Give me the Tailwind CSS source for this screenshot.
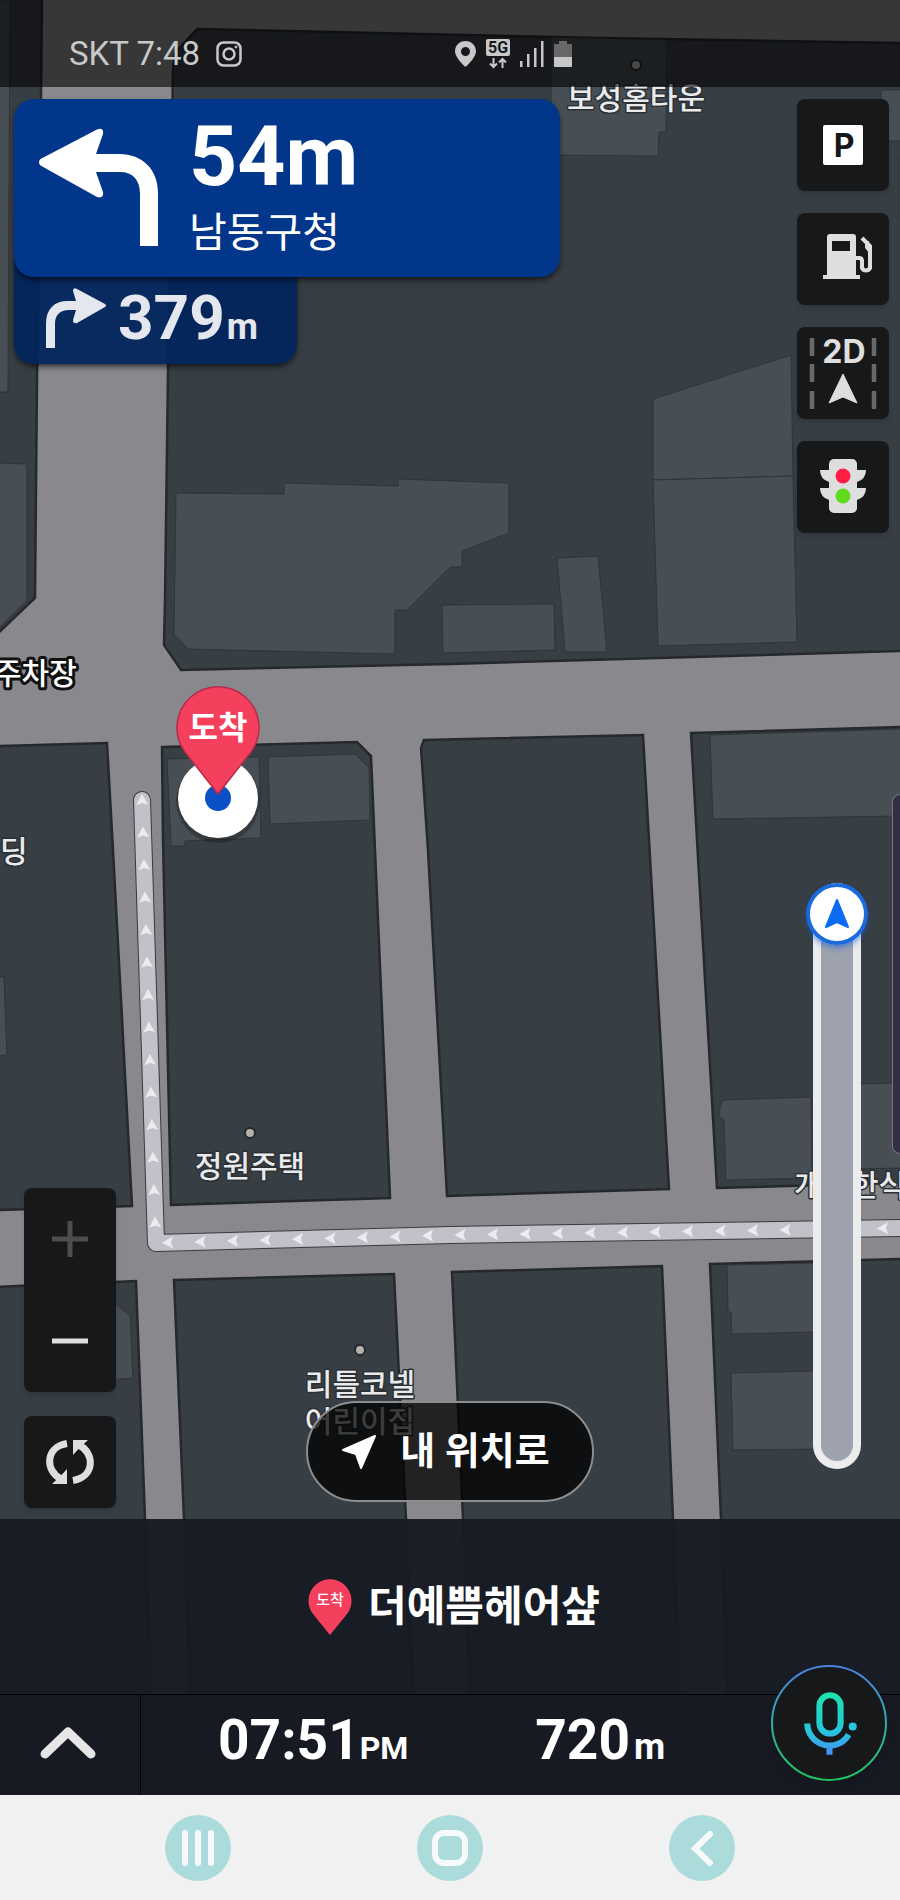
<!DOCTYPE html>
<html lang="ko">

<head>
    <meta charset="UTF-8" />
    <meta name="viewport" content="width=device-width, initial-scale=1.0" />
    <title>내비게이션</title>
    <script src="https://cdn.jsdelivr.net/npm/@tailwindcss/browser@4"></script>
</head>

<body class="bg-[#181b24] font-['Roboto','Noto_Sans_CJK_KR',sans-serif]">
    <div class="relative isolate flex min-h-screen flex-col overflow-hidden">

        <!-- Map -->
        <svg class="absolute inset-0 -z-10 h-full w-full" viewBox="0 0 900 1900" preserveAspectRatio="xMidYMin slice">
            <rect width="900" height="1900" fill="#89898d" />

            <!-- Blocks -->
            <g fill="#373e44" stroke="#26292c" stroke-width="2.5">
                <path d="M-4-4H42L41 98 37 380 35 598-4 635Z" />
                <path d="M197 29 600 38 904 43V651L450 664 181 670 164 645 165 600 168 370 173 70 175 53Z" />
                <path d="M-4 746 107 743 113 850 132 1206-4 1210Z" />
                <path d="M162 747 357 742 371 756 375 850 390 1198 171 1205 163 840Z" />
                <path d="M424 740 643 735 649 840 669 1189 447 1196 428 850 421 748Z" />
                <path d="M691 733 904 727V1183L717 1188 697 840Z" />
                <path d="M-4 1287 136 1281 145 1519 155 1800H-4Z" />
                <path d="M174 1280 394 1274 406 1519 418 1800H194L184 1519Z" />
                <path d="M452 1272 662 1266 673 1519 684 1800H474L463 1519Z" />
                <path d="M710 1264 904 1259V1800H731L721 1519Z" />
            </g>

            <!-- Buildings -->
            <g fill="#474e54" stroke="#2f3539" stroke-width="1">
                <path d="M-2 0H10L8 392H-2Z" />
                <path d="M-2 463 27 464V600L-2 629Z" />
                <path d="M551 37 667 40 666 132H659L658 156 551 155Z" />
                <path d="M881 90H902V141H881Z" />
                <path d="M899 158H902V218H899Z" />
                <path d="M176 493 284 494V483L398 486V479L509 483V533L462 551V567H450L407 610H395V654L188 649 174 634Z" />
                <path d="M442 605 554 604 555 650 443 653Z" />
                <path d="M557 558 598 556 607 652H565Z" />
                <path d="M653 399 791 355 793 476 653 480Z" />
                <path d="M653 480 793 476 797 642 658 646Z" />
                <path d="M710 735 902 729V816L713 819Z" />
                <path d="M167 759 259 757 261 838 185 841V846H171Z" />
                <path d="M268 757 355 754 369 768 370 820 270 824Z" />
                <path d="M-2 977H4L7 1055-2 1056Z" />
                <path d="M723 1100 811 1097 812 1178 726 1180 724 1120 719 1116 720 1107Z" />
                <path d="M850 1084 902 1083V1168L850 1169Z" />
                <path d="M727 1265 815 1263V1332L732 1334 731 1312 728 1312Z" />
                <path d="M731 1373 815 1371V1449L733 1450Z" />
                <path d="M110 1300 130 1315 133 1378 110 1380Z" />
            </g>

            <!-- Route -->
            <g fill="none" stroke-linejoin="round" stroke-linecap="round">
                <path d="M142 800 156 1243 450 1235 902 1228" stroke="#3a3a3e" stroke-width="18" />
                <path d="M142 800 156 1243 450 1235 902 1228" stroke="#c1c1c9" stroke-width="16" />
            </g>
            <g id="arrows" fill="#ececf0"></g>

            <!-- Places -->
            <g fill="#b5b2ae" stroke="#26292c" stroke-width="2">
                <circle cx="636" cy="65" r="5" />
                <circle cx="250" cy="1133" r="5" />
                <circle cx="360" cy="1350" r="5" />
            </g>
            <g class="font-['Noto_Sans_CJK_KR',sans-serif] text-[30px] font-medium" fill="#e8eaec" stroke="#2c3034" stroke-width="3" stroke-linejoin="round" paint-order="stroke">
                <text x="636" y="109" text-anchor="middle">보성홈타운</text>
                <text x="-6" y="684" fill="#fff" stroke="#111" stroke-width="6">주차장</text>
                <text x="0" y="862">딩</text>
                <text x="250" y="1177" text-anchor="middle">정원주택</text>
                <text x="360" y="1395" text-anchor="middle">리틀코넬</text>
                <text x="360" y="1432" text-anchor="middle">어린이집</text>
                <text x="794" y="1196">개</text>
                <text x="851" y="1196">한식</text>
            </g>

            <!-- Destination -->
            <circle cx="218" cy="801" r="42" fill="#000" opacity=".25" />
            <circle cx="218" cy="798" r="40" fill="#fff" />
            <circle cx="218" cy="798" r="13" fill="#0b50c4" />
            <path d="M218 794 185 752A41 41 0 1 1 251 752Z" fill="#f5405d" stroke="#b32c48" stroke-width="1.5" />
            <text x="218" y="739" text-anchor="middle" class="font-['Noto_Sans_CJK_KR',sans-serif] text-[32px] font-bold" fill="#fff">도착</text>
        </svg>

        <!-- Status bar -->
        <header class="flex h-[87px] items-center bg-black/60 pt-5 pr-[328px] pl-[69px] text-[#c8c8c8]">
            <span class="text-[33px] leading-none">SKT 7:48</span>
            <svg class="ml-4 h-[26px] w-[26px]" viewBox="0 0 26 26" fill="none" stroke="currentColor" stroke-width="2.5">
                <rect x="1.5" y="1.5" width="23" height="23" rx="6" />
                <circle cx="13" cy="13" r="5.5" />
                <circle cx="20" cy="6" r="1" fill="currentColor" stroke-width="1" />
            </svg>
            <div class="ml-auto flex items-center gap-[10px]">
                <svg class="h-[26px] w-[21px]" viewBox="0 0 21 26">
                    <path fill="currentColor" fill-rule="evenodd" d="M10.5 0C4.5 0 0 4.6 0 10.3C0 17 10.5 26 10.5 26S21 17 21 10.3C21 4.6 16.5 0 10.5 0ZM10.5 6a4.5 4.5 0 1 1 0 9 4.5 4.5 0 0 1 0-9Z" />
                </svg>
                <svg class="h-[30px] w-[24px]" viewBox="0 0 24 30">
                    <rect width="24" height="17" rx="2" fill="currentColor" />
                    <text x="12" y="14" text-anchor="middle" class="text-[16px] font-bold" fill="#15191c">5G</text>
                    <path d="M7.5 19V28M4 24.500 7.5 28 11 24.5M16.5 29V20M13 23.500 16.5 20 20 23.5" fill="none" stroke="currentColor" stroke-width="2" />
                </svg>
                <svg class="h-[26px] w-[24px]" viewBox="0 0 24 26" fill="currentColor">
                    <rect x="0" y="20" width="2.5" height="6" />
                    <rect x="7" y="13" width="2.5" height="13" />
                    <rect x="14" y="7" width="2.5" height="19" />
                    <rect x="21" y="0" width="2.5" height="26" />
                </svg>
                <svg class="h-[26px] w-[18px]" viewBox="0 0 18 26">
                    <path d="M5 0H13V3H18V16H0V3H5Z" fill="#686868" />
                    <path d="M0 16H18V25a1 1 0 0 1-1 1H1a1 1 0 0 1-1-1Z" fill="currentColor" />
                </svg>
            </div>
        </header>

        <main class="relative flex flex-1 flex-col justify-between pt-3 pb-[11px]">
            <div class="flex items-start justify-between pr-[11px] pl-[14px]">
                <!-- Turn guidance -->
                <section class="w-[546px] text-white">
                    <div class="relative z-10 flex items-center gap-[30px] rounded-[20px] bg-[#02368b] pt-[18px] pb-5 pl-[25px] shadow-md shadow-black/50">
                        <svg class="h-[118px] w-[120px]" viewBox="0 0 120 118" fill="#fff">
                            <path d="M1.500 31 58 1.500Q65-1 64 6L57 26H80C104 26 119 42 119 65V118H101V66C101 52 94 44 81 44H57L64 64Q65 71 58 69L1.500 37.500Q-1.500 34 1.500 31Z" />
                        </svg>
                        <div>
                            <p class="text-[84px] leading-[80px] font-bold">54m</p>
                            <p class="mt-3 text-[41px] leading-[48px]">남동구청</p>
                        </div>
                    </div>
                    <div class="-mt-5 flex w-[283px] items-center gap-3 rounded-b-[20px] bg-[#02255c]/95 pt-[21px] pb-[6px] pl-8 text-[#e4e7ee] shadow-md shadow-black/50">
                        <svg class="h-[60px] w-[60px]" viewBox="0 0 60 60" fill="currentColor">
                            <path d="M0 60V36C0 21 8 13 22 13H30L27 3Q27-1 31 1L59 16Q61 18 59 19L31 35Q27 36 27 32L30 22H23C14 22 9 27 9 36V60Z" />
                        </svg>
                        <p class="flex items-baseline gap-[2px] text-[62px] leading-[80px] font-bold">379<span class="text-[36px] leading-none">m</span></p>
                    </div>
                </section>

                <!-- Map options -->
                <div class="flex flex-col gap-[22px]">
                    <button type="button" aria-label="주차장" class="h-[92px] w-[92px] rounded-lg bg-[#17181a] shadow-md">
                        <svg viewBox="0 0 92 92">
                            <rect x="26" y="26" width="40" height="40" rx="2" fill="#fff" />
                            <text x="47" y="58" text-anchor="middle" class="font-['Inter',sans-serif] text-[32px] font-bold" fill="#17181a">P</text>
                        </svg>
                    </button>
                    <button type="button" aria-label="주유소" class="h-[92px] w-[92px] rounded-lg bg-[#17181a] shadow-md">
                        <svg viewBox="0 0 92 92">
                            <path fill="#dedede" fill-rule="evenodd" d="M30 24a3 3 0 0 1 3-3H56a3 3 0 0 1 3 3V62H63V66H26V62H30ZM35 28V38H53V28Z" />
                            <path d="M59 45H62Q65 45 65 48V55A4.500 4.500 0 0 0 73 55V33L65 25M70 28V34L73 38" fill="none" stroke="#dedede" stroke-width="4" />
                        </svg>
                    </button>
                    <button type="button" aria-label="2D 지도" class="h-[92px] w-[92px] rounded-lg bg-[#17181a] shadow-md">
                        <svg viewBox="0 0 92 92">
                            <path d="M15 11V29M15 37V55M15 64V82M77 11V29M77 37V55M77 64V82" stroke="#68696b" stroke-width="4.5" />
                            <text x="47" y="36" text-anchor="middle" class="font-['Inter',sans-serif] text-[32px] font-bold" fill="#dedede">2D</text>
                            <path d="M46 47 60 76 46 70 32 76Z" fill="#dedede" stroke="#dedede" stroke-width="1" stroke-linejoin="round" />
                        </svg>
                    </button>
                    <button type="button" aria-label="신호등" class="h-[92px] w-[92px] rounded-lg bg-[#17181a] shadow-md">
                        <svg viewBox="0 0 92 92">
                            <rect x="32" y="18" width="28" height="54" rx="5" fill="#dedede" />
                            <path d="M23 29H69Q69 38 60 41H32Q23 38 23 29ZM23 47H69Q69 56 60 59H32Q23 56 23 47Z" fill="#dedede" />
                            <circle cx="46" cy="35" r="7.5" fill="#ff1f44" />
                            <circle cx="46" cy="55" r="7.5" fill="#5fdc1e" />
                        </svg>
                    </button>
                </div>
            </div>

            <!-- Side drawer handle -->
            <div class="absolute top-[707px] right-0 h-[360px] w-2 rounded-l-lg border border-r-0 border-[#777484] bg-[#322f45]"></div>

            <div class="grid grid-cols-[1fr_auto_1fr] items-end px-6">
                <div class="flex w-[92px] flex-col gap-6">
                    <div class="flex flex-col rounded-lg bg-[#17181a] shadow-md">
                        <button type="button" aria-label="확대" class="flex h-[102px] items-center justify-center">
                            <svg class="h-9 w-9" viewBox="0 0 36 36" stroke="#4c4d4e" stroke-width="5">
                                <path d="M0 18H36M18 0V36" />
                            </svg>
                        </button>
                        <button type="button" aria-label="축소" class="flex h-[102px] items-center justify-center">
                            <svg class="h-9 w-9" viewBox="0 0 36 36" stroke="#dedede" stroke-width="5">
                                <path d="M0 18H36" />
                            </svg>
                        </button>
                    </div>
                    <button type="button" aria-label="경로 재탐색" class="h-[92px] w-[92px] rounded-lg bg-[#17181a] shadow-md">
                        <svg viewBox="0 0 92 92">
                            <path d="M43 27.500C21 31 21 55 37 63M49 64.500C71 61 71 37 55 29" fill="none" stroke="#dedede" stroke-width="7" />
                            <path d="M28 68H43V53L37.500 59ZM64 24H49V39L54.500 33Z" fill="#dedede" />
                        </svg>
                    </button>
                </div>

                <button type="button" class="mb-[6px] flex h-[101px] items-center gap-6 rounded-full border-2 border-[#8b8d8f] bg-black/75 pr-[42px] pl-[34px] text-[38px] font-bold text-white">
                    <svg class="h-[34px] w-[34px]" viewBox="0 0 34 34">
                        <path d="M33 1 19 33 14 19 1 15Z" fill="#fff" stroke="#fff" stroke-width="2" stroke-linejoin="round" />
                    </svg>
                    <span>내 위치로</span>
                </button>

                <!-- Route progress -->
                <div role="progressbar" aria-label="경로 진행" aria-valuenow="0" class="relative mr-[15px] mb-[39px] h-[586px] w-[48px] justify-self-end rounded-full border-8 border-[#f0f0f2]/95 bg-[#9ea2ae]">
                    <svg class="absolute -top-2 -left-[15px] h-[62px] w-[62px] rounded-full shadow-md shadow-[#1a6ae0]/50" viewBox="0 0 62 62">
                        <circle cx="31" cy="31" r="29" fill="#fff" stroke="#1a6ae0" stroke-width="4" />
                        <path d="M31 17 42 44 31 39 20 44Z" fill="#0b6bf2" stroke="#0b6bf2" stroke-width="2" stroke-linejoin="round" />
                    </svg>
                </div>
            </div>
        </main>

        <!-- Trip summary -->
        <footer>
            <div class="flex h-[175px] items-center justify-center gap-4 bg-[#181b24]/97 pl-2">
                <svg class="h-[56px] w-[44px]" viewBox="0 0 44 56">
                    <path d="M22 56 5 35A21.500 21.500 0 1 1 39 35Z" fill="#f5405d" />
                    <text x="22" y="26" text-anchor="middle" class="text-[15px] font-medium" fill="#fff">도착</text>
                </svg>
                <h1 class="text-[42px] leading-none font-bold text-white">더예쁨헤어샾</h1>
            </div>
            <div class="flex h-[101px] border-t border-black bg-[#171a23] text-white">
                <button type="button" aria-label="펼치기" class="flex w-[141px] items-center justify-center border-r border-black pr-1 pb-1">
                    <svg class="h-8 w-[56px]" viewBox="0 0 56 32" fill="none" stroke="#e6e6e6" stroke-width="9" stroke-linecap="round" stroke-linejoin="round">
                        <path d="M5 27 28 5 51 27" />
                    </svg>
                </button>
                <p class="flex flex-3 items-baseline justify-center text-[55px] leading-[90px] font-bold">07:51<span class="text-[32px] leading-none">PM</span></p>
                <p class="flex flex-2 items-baseline justify-center gap-1 text-[55px] leading-[90px] font-bold">720<span class="text-[36px] leading-none">m</span></p>
                <div class="w-[185px] pl-[56px]">
                    <button type="button" aria-label="음성 안내" class="-mt-[30px] h-[116px] w-[116px] rounded-full shadow-lg">
                        <svg viewBox="0 0 115 115">
                            <defs>
                                <linearGradient id="ring" x1="0" y1="0" x2="0" y2="1">
                                    <stop offset="0" stop-color="#4a80e0" />
                                    <stop offset=".5" stop-color="#39a9a4" />
                                    <stop offset="1" stop-color="#1ec65e" />
                                </linearGradient>
                                <linearGradient id="mic" gradientUnits="userSpaceOnUse" x1="0" y1="27" x2="0" y2="89">
                                    <stop offset="0" stop-color="#1fe2ac" />
                                    <stop offset=".6" stop-color="#25c8dc" />
                                    <stop offset="1" stop-color="#4592f5" />
                                </linearGradient>
                            </defs>
                            <circle cx="57.5" cy="57.5" r="56.5" fill="#17181a" stroke="url(#ring)" stroke-width="2" />
                            <g fill="none" stroke="url(#mic)" stroke-width="6">
                                <rect x="48" y="30" width="21" height="38" rx="10.5" />
                                <path d="M36 58A22 22 0 0 0 77 69M58 80V89" />
                            </g>
                            <circle cx="81" cy="61" r="4" fill="#25c8dc" />
                        </svg>
                    </button>
                </div>
            </div>
        </footer>

        <!-- System navigation -->
        <nav class="grid h-[105px] grid-cols-3 place-items-center bg-[#f1f1f1] px-[8%]">
            <button type="button" aria-label="최근 앱" class="h-[66px] w-[66px] rounded-full bg-[#abdcdb]">
                <svg viewBox="0 0 66 66" stroke="#f7fafa" stroke-width="6" stroke-linecap="round">
                    <path d="M20 18V48M33 18V48M46 18V48" />
                </svg>
            </button>
            <button type="button" aria-label="홈" class="h-[66px] w-[66px] rounded-full bg-[#abdcdb]">
                <svg viewBox="0 0 66 66" fill="none" stroke="#f7fafa" stroke-width="6">
                    <rect x="18" y="18" width="30" height="30" rx="9" />
                </svg>
            </button>
            <button type="button" aria-label="뒤로" class="h-[66px] w-[66px] rounded-full bg-[#abdcdb]">
                <svg viewBox="0 0 66 66" fill="none" stroke="#f7fafa" stroke-width="6" stroke-linecap="round">
                    <path d="M41 19 26 33.500 41 48" />
                </svg>
            </button>
        </nav>
    </div>

    <script>
        // direction arrows along the route
        const arrows = document.getElementById('arrows');
        let html = '';

        function arrow(x, y, angle) {
            html += `<path d="M0-6 6 5 0 3-6 5Z" transform="translate(${x} ${y}) rotate(${angle})" />`;
        }

        for (let i = 0; i < 14; i++) {
            arrow(142 + i, 800 + i * 32.5, -2);
        }
        for (let x = 168; x < 900; x += 32.5) {
            arrow(x, x < 450 ? 1243 - (x - 156) * 0.027 : 1235 - (x - 450) * 0.0155, -91);
        }
        arrows.innerHTML = html;
    </script>
</body>

</html>
